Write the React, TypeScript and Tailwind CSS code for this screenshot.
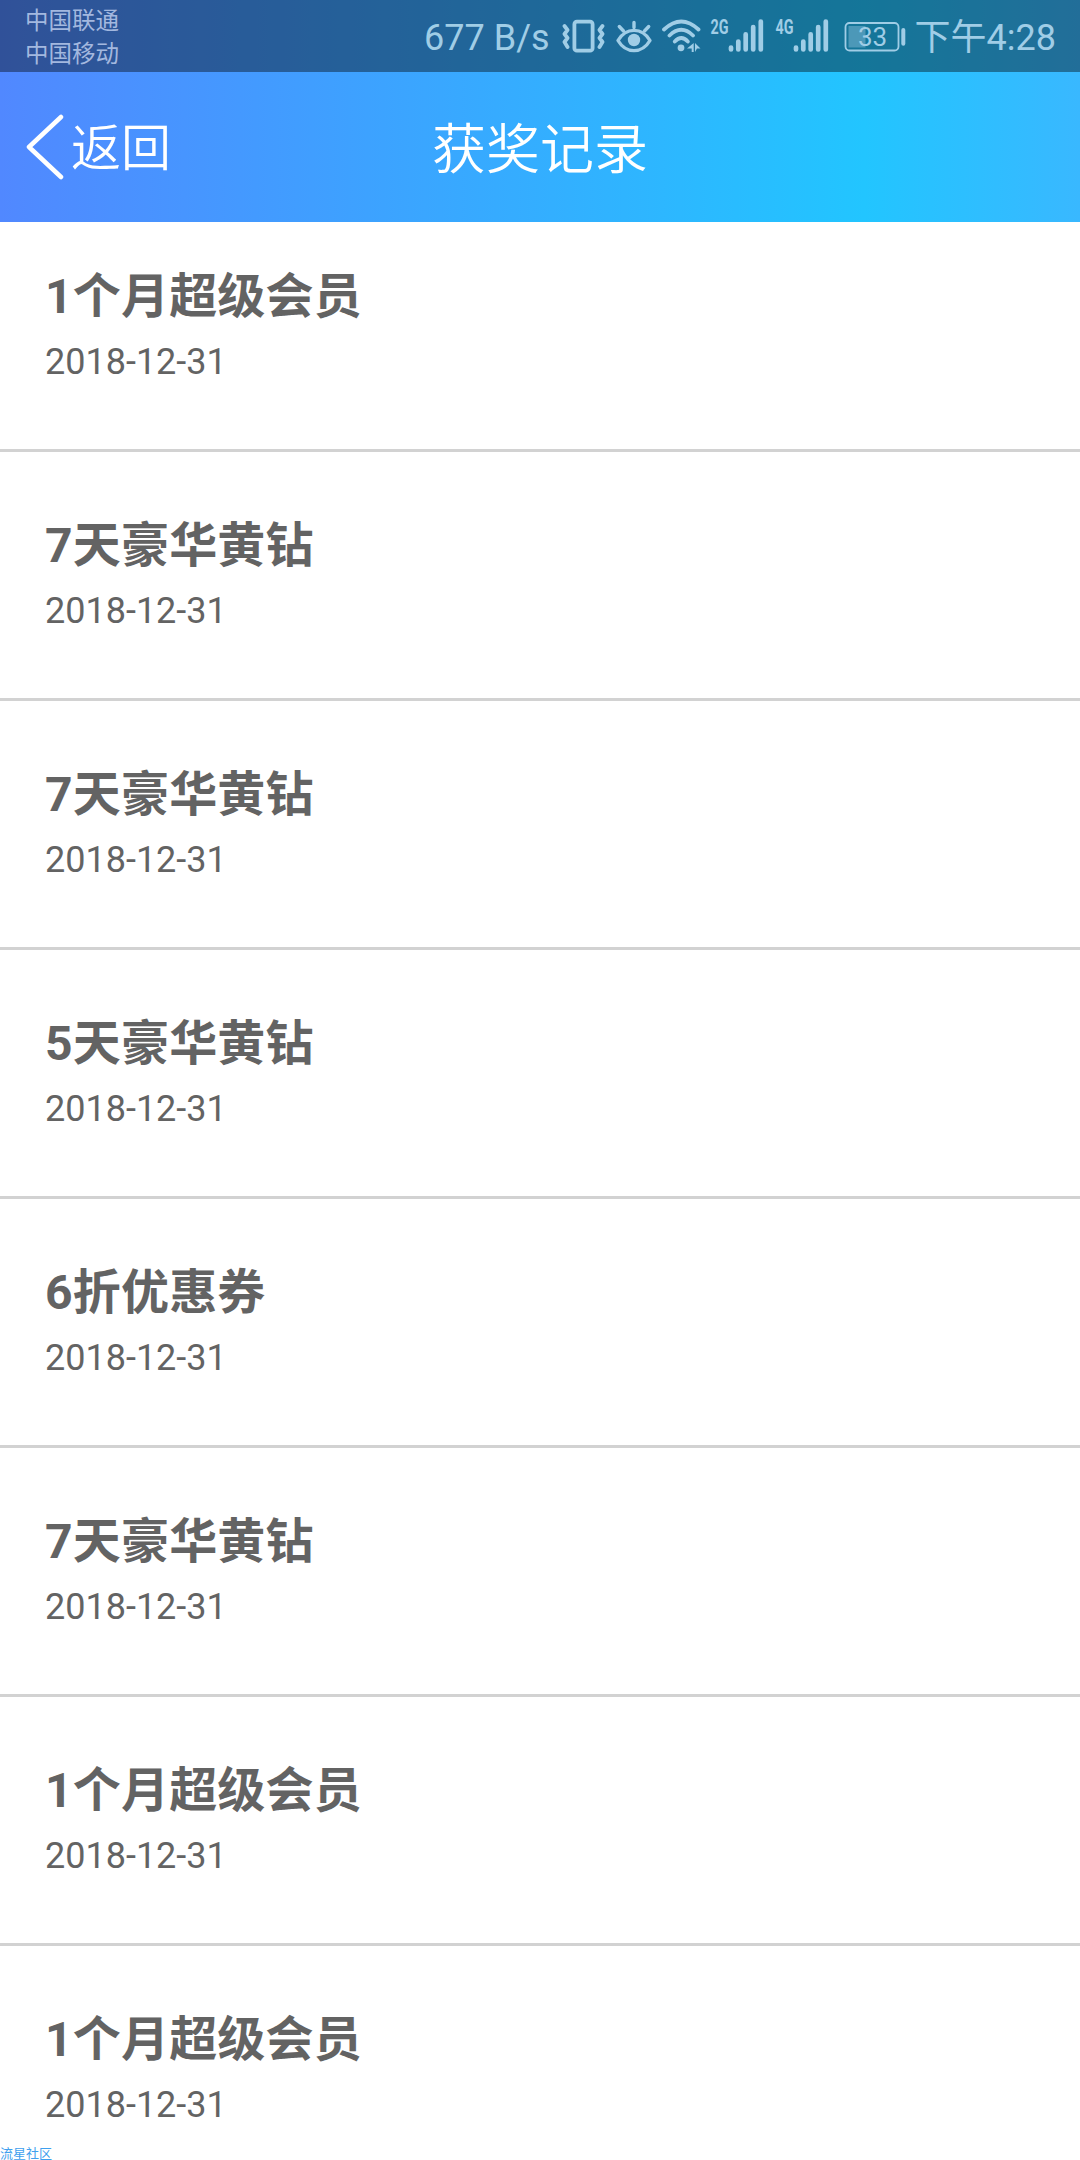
import type { ReactNode } from "react";

interface AwardRecord {
  id: number;
  title: string;
  date: string;
}

const RECORDS: AwardRecord[] = [
  { id: 1, title: "1个月超级会员", date: "2018-12-31" },
  { id: 2, title: "7天豪华黄钻", date: "2018-12-31" },
  { id: 3, title: "7天豪华黄钻", date: "2018-12-31" },
  { id: 4, title: "5天豪华黄钻", date: "2018-12-31" },
  { id: 5, title: "6折优惠券", date: "2018-12-31" },
  { id: 6, title: "7天豪华黄钻", date: "2018-12-31" },
  { id: 7, title: "1个月超级会员", date: "2018-12-31" },
  { id: 8, title: "1个月超级会员", date: "2018-12-31" },
];

function StatusIcon({ width, className, children }: { width: number; className?: string; children: ReactNode }) {
  return (
    <svg width={width} height={52} viewBox={`0 -8 ${width} 52`} fill="none" stroke="currentColor" className={`shrink-0 ${className ?? ""}`}>
      {children}
    </svg>
  );
}

function VibrateIcon() {
  return (
    <StatusIcon width={43} className="ml-3">
      <rect x="12.4" y="3.7" width="18.2" height="29" rx="2.5" strokeWidth="3.8" />
      <path d="M2.500 8l3 4-3 4 3 4-3 4 3 5M40.500 8l-3 4 3 4-3 4 3 4-3 5" strokeWidth="3.800" strokeLinecap="round" strokeLinejoin="round" />
    </StatusIcon>
  );
}

function EyeIcon() {
  return (
    <StatusIcon width={36} className="ml-[11px]">
      <path d="M2 22.500C10 9 26 9 34 22.500C26 36 10 36 2 22.500Z" strokeWidth="3.400" strokeLinejoin="round" />
      <circle cx="18" cy="22" r="6.200" fill="currentColor" stroke="none" />
      <path d="M18 4.500v5M3.300 8.500l4.200 4.500M32.700 8.500l-4.200 4.500" strokeWidth="3.400" strokeLinecap="round" />
    </StatusIcon>
  );
}

function WifiIcon() {
  return (
    <StatusIcon width={40} className="ml-[9px]">
      <path d="M3 11.500Q20.300 -4.500 37.500 11.500M8.500 17.500Q20.300 6 32 17.500M13.800 23.500Q20.300 16.500 26.800 23.500" strokeWidth="3.800" strokeLinecap="round" />
      <circle cx="20" cy="29.800" r="3.400" fill="currentColor" stroke="none" />
      <path d="M32.700 25v9h-2v-3.500H26zM34 25l5.500 5.500H36L34 34z" fill="currentColor" stroke="none" />
    </StatusIcon>
  );
}

function SignalIcon({ label, className }: { label: string; className: string }) {
  return (
    <StatusIcon width={54} className={className}>
      <text x="0.500" y="16" textLength="18" lengthAdjust="spacingAndGlyphs" className="font-[Roboto,sans-serif] text-[20px] font-bold" fill="currentColor" stroke="none">
        {label}
      </text>
      <path d="M21 29.500v2M28.300 23.500v8M35.700 16.300v15.200M43.200 9v22.500M50.800 3.500v28" strokeWidth="4.700" strokeLinecap="round" />
    </StatusIcon>
  );
}

function BatteryIcon() {
  return (
    <StatusIcon width={62} className="ml-[15px]">
      <rect x="1.5" y="5" width="53" height="27.5" rx="4" strokeWidth="1.8" />
      <rect x="4.5" y="8" width="17" height="21.500" fill="currentColor" fillOpacity="0.400" stroke="none" />
      <text x="14" y="28" textLength="29" className="font-[Roboto,sans-serif] text-[26px]" fill="currentColor" stroke="none">
        33
      </text>
      <path d="M59.300 12v13.800" strokeWidth="4" strokeLinecap="round" />
    </StatusIcon>
  );
}

function StatusBar() {
  return (
    <div className="flex h-[72px] items-start justify-between bg-black/40 pr-6 pl-[25px] text-[#a0cde6]">
      <div className="flex flex-col pt-[5px] text-[23.5px] leading-[33px] text-[#a3b8df]">
        <span>中国联通</span>
        <span>中国移动</span>
      </div>
      <div className="flex h-[72px] items-center text-[36px]">
        <span className="pt-1 leading-[72px]">677 B/s</span>
        <VibrateIcon />
        <EyeIcon />
        <WifiIcon />
        <SignalIcon label="2G" className="ml-[9px]" />
        <SignalIcon label="4G" className="ml-[11px]" />
        <BatteryIcon />
        <span className="ml-[9px] pt-1 leading-[72px]">下午4:28</span>
      </div>
    </div>
  );
}

function NavBar() {
  return (
    <div className="grid h-[150px] grid-cols-3 items-center text-white">
      <button type="button" className="flex items-center pl-[26px]">
        <svg width="38" height="66" viewBox="0 0 38 66" fill="none" stroke="currentColor" strokeWidth="4.5" strokeLinecap="round" strokeLinejoin="round">
          <path d="M35 3L3 33l32 30" />
        </svg>
        <span className="ml-[7px] pt-[3px] text-[50px] leading-[70px] font-[350]">返回</span>
      </button>
      <h1 className="pt-2 text-center text-[54px] leading-[78px] font-[350]">获奖记录</h1>
    </div>
  );
}

function RecordRow({ record }: { record: AwardRecord }) {
  return (
    <li className="h-[249px] shrink-0 border-b-[3px] border-[#d2d2d2] px-[45px] pt-[58px] text-[#636363]">
      <p className="text-[48px] leading-[71px] font-bold tracking-[0.2px]">{record.title}</p>
      <p className="text-[36px] leading-[60px]">{record.date}</p>
    </li>
  );
}

export default function App() {
  return (
    <div className="relative flex h-[2160px] w-[1080px] flex-col overflow-hidden bg-white font-[Roboto,'Noto_Sans_CJK_SC',sans-serif]">
      <header className="shrink-0 bg-[linear-gradient(90deg,#5188ff_0%,#22c5ff_80%,#39b8ff_100%)]">
        <StatusBar />
        <NavBar />
      </header>
      <main className="min-h-0 flex-1 overflow-hidden">
        <ul className="-mt-[19px] flex flex-col">
          {RECORDS.map((record) => (
            <RecordRow key={record.id} record={record} />
          ))}
        </ul>
      </main>
      <span className="absolute bottom-0 left-0 text-[13px] leading-[13px] text-[#3fa0ee]">流星社区</span>
    </div>
  );
}
